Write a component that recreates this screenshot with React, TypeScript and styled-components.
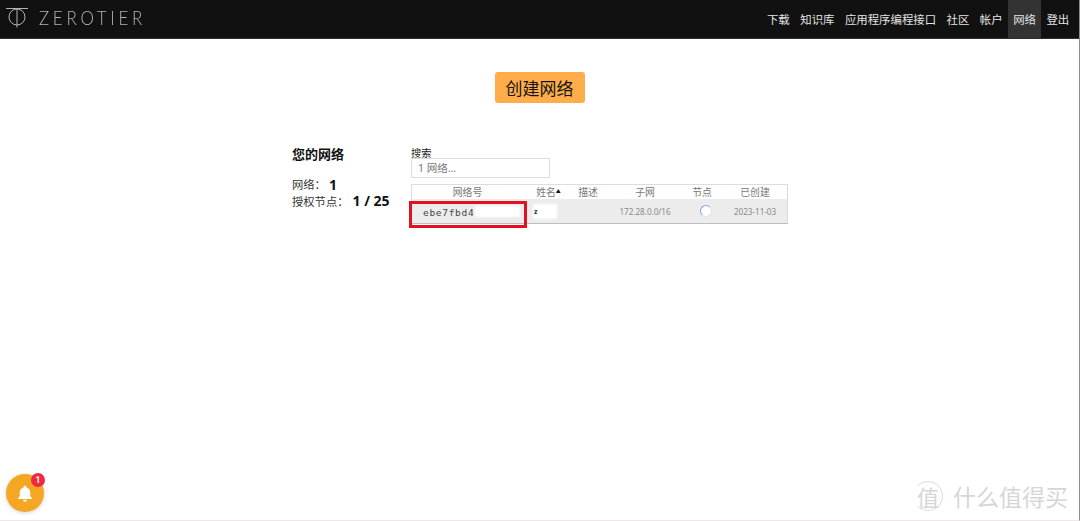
import React from "react";
import styled, { createGlobalStyle } from "styled-components";

const Global = createGlobalStyle`
  html, body { margin: 0; padding: 0; background: #fff; height: 100%; overflow: hidden; }
  body { font-family: "Noto Sans", "Noto Sans CJK SC", sans-serif; color: #111; }
  #root { height: 100%; }
`;
const CJK = `"Noto Sans", "Noto Sans CJK SC", sans-serif`;

const Page = styled.div`
  position: relative;
  width: 1080px;
  height: 521px;
  overflow: hidden;
  background: #fff;
  box-sizing: border-box;
  border-bottom: 1px solid #efe6ea;
  border-right: 1px solid #8c8c8c;
`;
const Header = styled.header`
  height: 39px;
  box-sizing: border-box;
  background: #111;
  border-bottom: 1px solid #2e2e2e;
  display: flex;
  align-items: stretch;
  justify-content: space-between;
  padding: 0 4.5px 0 6px;
`;
const Brand = styled.div`
  display: flex;
  align-items: center;
  gap: 11px;
  padding-bottom: 3px;
`;
const BrandName = styled.span`
  font-family: Lato, sans-serif;
  font-weight: 300;
  font-size: 17px;
  letter-spacing: 3.7px;
  color: #b4b4b4;
  transform: scaleY(1.2);
`;
const Nav = styled.nav`
  display: flex;
  align-items: stretch;
`;
const NavItem = styled.a<{ $active?: boolean }>`
  display: flex;
  align-items: center;
  padding: 0 5.25px;
  font-family: ${CJK};
  font-size: 11.4px;
  color: #e4e4e4;
  background: ${(p) => (p.$active ? "#333" : "transparent")};
`;
const Main = styled.main`
  display: flex;
  flex-direction: column;
  align-items: center;
  padding-top: 33px;
`;
const CreateButton = styled.button`
  width: 90px;
  height: 31px;
  border: 0;
  border-radius: 3px;
  background: #ffad4a;
  color: #151515;
  font-family: ${CJK};
  font-size: 17px;
  padding: 0;
`;
const Columns = styled.div`
  display: flex;
  align-self: flex-start;
  margin: 42px 0 0 292px;
`;
const Side = styled.aside`
  width: 119px;
`;
const SideTitle = styled.h2`
  margin: 0 0 13px;
  font-size: 13px;
  line-height: 18px;
  font-weight: 700;
  color: #111;
`;
const Stat = styled.div`
  display: flex;
  align-items: center;
  height: 16.5px;
  font-size: 11.3px;
  color: #333;
`;
const StatValue = styled.b<{ $gap: number }>`
  margin-left: ${(p) => p.$gap}px;
  font-size: 14px;
  color: #111;
`;
const Content = styled.section`
  width: 377px;
`;
const SearchLabel = styled.label`
  display: block;
  font-size: 10.2px;
  line-height: 10px;
  margin-top: 3px;
  color: #222;
`;
const SearchBox = styled.div`
  width: 139px;
  height: 20px;
  box-sizing: border-box;
  border: 1px solid #ddd;
  padding-left: 6px;
  font-size: 10.5px;
  line-height: 18px;
  color: #777;
`;
const Table = styled.div`
  margin-top: 6px;
  border: 1px solid #d9d9d9;
  border-bottom: 1px solid #bdbdbd;
  border-top-color: #ddd;
`;
const Grid = styled.div<{ $body?: boolean }>`
  display: grid;
  grid-template-columns: 111px 51px 28px 86px 28px 1fr;
  align-items: center;
  text-align: center;
  height: ${(p) => (p.$body ? 24 : 14)}px;
  background: ${(p) => (p.$body ? "#ececec" : "#fff")};
  font-size: ${(p) => (p.$body ? 8.1 : 9.8)}px;
  color: ${(p) => (p.$body ? "#8a8a8a" : "#777")};
`;
const IdCell = styled.span`
  font-family: "DejaVu Sans Mono", monospace;
  font-size: 9.5px;
  letter-spacing: 0.7px;
  color: #444;
  text-align: left;
  padding-left: 11px;
  transform: translateY(1px);
`;
const NameCell = styled.span`
  position: relative;
  z-index: 1;
  color: #333;
  font-size: 7px;
  font-weight: 700;
  text-align: left;
  padding-left: 11px;
`;
const Sort = styled.span`
  font-size: 5px;
  color: #111;
  vertical-align: 3px;
`;
const LastCell = styled.span`
  padding-left: 7px;
`;
const Spinner = styled.span`
  display: inline-block;
  width: 10px;
  height: 10px;
  margin-left: 8px;
  border-radius: 50%;
  border: 1px solid #dfe4ea;
  border-left-color: #7da4d6;
  border-top-color: #7da4d6;
  background: #fff;
  justify-self: center;
`;
const Redaction = styled.div<{ $x: number; $y: number; $w: number; $h: number }>`
  position: absolute;
  left: ${(p) => p.$x}px;
  top: ${(p) => p.$y}px;
  width: ${(p) => p.$w}px;
  height: ${(p) => p.$h}px;
  background: #fff;
  filter: blur(1px);
`;
const Highlight = styled.div`
  position: absolute;
  left: 409px;
  top: 201px;
  width: 118px;
  height: 27px;
  box-sizing: border-box;
  border: 3px solid #e5101f;
`;
const Bell = styled.button`
  position: absolute;
  left: 6px;
  top: 474px;
  width: 38px;
  height: 38px;
  border: 0;
  padding: 0;
  border-radius: 50%;
  background: #f5a623;
  box-shadow: 0 1px 4px rgba(0, 0, 0, 0.18);
  display: flex;
  align-items: center;
  justify-content: center;
`;
const Badge = styled.span`
  position: absolute;
  right: -1px;
  top: -1px;
  width: 14px;
  height: 14px;
  border-radius: 50%;
  background: #f0293e;
  color: #fff;
  font-family: Roboto, sans-serif;
  font-weight: 700;
  font-size: 8.5px;
  line-height: 14px;
  text-align: center;
`;
const Watermark = styled.div`
  position: absolute;
  left: 913px;
  top: 481px;
  display: flex;
  align-items: center;
  gap: 10px;
  color: #d6d6d6;
  font-family: "Noto Sans CJK SC", sans-serif;
  font-size: 23px;
  line-height: 30px;
`;
const Seal = styled.span`
  width: 28px;
  height: 28px;
  display: flex;
  align-items: center;
  justify-content: center;
  border: 1px solid #dcdcdc;
  border-left-color: transparent;
  border-radius: 50%;
  font-size: 22px;
`;

const nav = ["下载", "知识库", "应用程序编程接口", "社区", "帐户", "网络", "登出"];

export default function App() {
  return (
    <Page>
      <Global />
      <Header>
        <Brand>
          <svg width="22" height="20" viewBox="0 0 22 20" fill="none" stroke="#b4b4b4" strokeWidth="1">
            <path d="M0 .5h22M11 .5v19" />
            <circle cx="11" cy="9" r="8" />
          </svg>
          <BrandName>ZEROTIER</BrandName>
        </Brand>
        <Nav>
          {nav.map((n) => (
            <NavItem key={n} $active={n === "网络"}>{n}</NavItem>
          ))}
        </Nav>
      </Header>
      <Main>
        <CreateButton>创建网络</CreateButton>
        <Columns>
          <Side>
            <SideTitle>您的网络</SideTitle>
            <Stat>网络： <StatValue $gap={3}>1</StatValue></Stat>
            <Stat>授权节点： <StatValue $gap={4}>1 / 25</StatValue></Stat>
          </Side>
          <Content>
            <SearchLabel>搜索</SearchLabel>
            <SearchBox>1 网络...</SearchBox>
            <Table>
              <Grid>
                <span>网络号</span>
                <span>姓名<Sort>▲</Sort></span>
                <span>描述</span>
                <span>子网</span>
                <span>节点</span>
                <LastCell>已创建</LastCell>
              </Grid>
              <Grid $body>
                <IdCell>ebe7fbd4</IdCell>
                <NameCell>z</NameCell>
                <span />
                <span>172.28.0.0/16</span>
                <Spinner />
                <LastCell>2023-11-03</LastCell>
              </Grid>
            </Table>
          </Content>
        </Columns>
      </Main>
      <Redaction $x={475} $y={206} $w={45} $h={11} />
      <Redaction $x={533} $y={204} $w={24} $h={15} />
      <Highlight />
      <Bell aria-label="通知">
        <svg width="18" height="18" viewBox="0 0 24 24" fill="#fff">
          <path d="M12 2a2 2 0 0 0-2 2v.6A7 7 0 0 0 5 11v5l-2 2.5V20h18v-1.5L19 16v-5a7 7 0 0 0-5-6.4V4a2 2 0 0 0-2-2z" />
          <path d="M9.5 21a2.5 2.5 0 0 0 5 0z" />
        </svg>
        <Badge>1</Badge>
      </Bell>
      <Watermark>
        <Seal>值</Seal>
        <span>什么值得买</span>
      </Watermark>
    </Page>
  );
}
